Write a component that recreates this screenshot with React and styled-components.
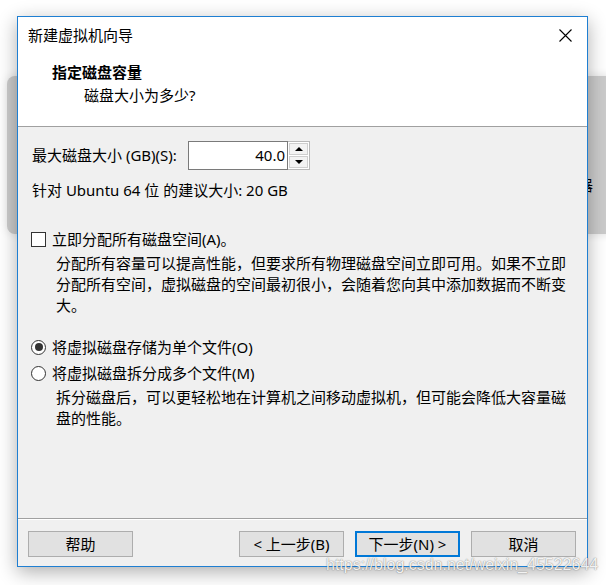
import React from 'react';
import styled, { createGlobalStyle } from 'styled-components';

const GlobalStyle = createGlobalStyle`
  html, body {
    margin: 0;
    padding: 0;
    background: #ffffff;
  }
  body {
    width: 606px;
    height: 585px;
    overflow: hidden;
    font-family: "Noto Sans", "Noto Sans CJK SC", sans-serif;
    color: #000;
  }
`;

const Desktop = styled.div`
  position: relative;
  width: 606px;
  height: 585px;
  overflow: hidden;
  background: #ffffff;
`;

// window behind the wizard
const BackWindow = styled.div`
  position: absolute;
  left: 7px;
  top: 76px;
  width: 640px;
  height: 158px;
  background: #cbcbcb;
  border-radius: 8px;
  box-shadow: 0 0 10px rgba(0, 0, 0, 0.12);
`;

const BackText = styled.span`
  position: absolute;
  left: 571px;
  top: 99px;
  font-size: 15px;
  line-height: 20px;
  font-family: "Noto Sans CJK SC", sans-serif;
`;

const Dialog = styled.div`
  position: absolute;
  left: 17px;
  top: 16px;
  width: 571px;
  height: 551px;
  box-sizing: border-box;
  border: 1px solid #1f7fd2;
  background: #f0f0f0;
  display: flex;
  flex-direction: column;
  box-shadow: 0 5px 18px rgba(0, 0, 0, 0.32);
  font-size: 15px;
`;

const TitleBar = styled.div`
  height: 36px;
  display: flex;
  align-items: center;
  justify-content: space-between;
  padding: 0 15px 0 10px;
  background: #fff;
`;

const Title = styled.span`
  font-size: 15px;
  line-height: 20px;
`;

const CloseIcon = styled.svg`
  width: 13px;
  height: 13px;
  display: block;
`;

const Header = styled.div`
  background: #fff;
  padding: 9px 0 21px 34px;
  border-bottom: 1px solid #a0a0a0;
`;

const HeaderTitle = styled.div`
  font-weight: bold;
  line-height: 20px;
`;

const HeaderSub = styled.div`
  margin-top: 3px;
  padding-left: 32px;
  line-height: 20px;
`;

const Body = styled.div`
  flex: 1;
  padding: 14px 0 0 14px;
`;

const SizeRow = styled.div`
  display: flex;
  align-items: center;
  height: 29px;
`;

const SizeLabel = styled.span`
  width: 156px;
  line-height: 20px;
  margin-top: -2px;
`;

const SpinField = styled.div`
  width: 100px;
  height: 29px;
  box-sizing: border-box;
  border: 1px solid #7a7a7a;
  background: #fff;
  text-align: right;
  padding-right: 2px;
  line-height: 27px;
`;

const SpinButtons = styled.div`
  width: 22px;
  height: 29px;
  box-sizing: border-box;
  border: 1px solid #b9b9b9;
  border-left: none;
  display: flex;
  flex-direction: column;
  gap: 1px;
  background: #fff;
  padding: 1px;
`;

const SpinButton = styled.div`
  flex: 1;
  border: 1px solid #cfcfcf;
  background: #f3f3f3;
  display: flex;
  align-items: center;
  justify-content: center;
  &::after {
    content: '';
    width: 0;
    height: 0;
    border-left: 4px solid transparent;
    border-right: 4px solid transparent;
    ${({ $down }) =>
      $down ? 'border-top: 4px solid #000;' : 'border-bottom: 4px solid #000;'}
  }
`;

const Line = styled.div`
  margin-top: ${({ $top }) => $top}px;
  line-height: 20px;
`;

const OptionRow = styled.div`
  display: flex;
  align-items: center;
  gap: 6px;
  margin-top: ${({ $top }) => $top}px;
  margin-left: -1px;
  line-height: 22px;
`;

const CheckBox = styled.span`
  width: 15px;
  height: 15px;
  box-sizing: border-box;
  border: 1px solid #333;
  background: #fff;
  flex: none;
`;

const Radio = styled.span`
  width: 15px;
  height: 15px;
  box-sizing: border-box;
  border-radius: 50%;
  border: 1px solid #333;
  background: #fff;
  flex: none;
  display: flex;
  align-items: center;
  justify-content: center;
  &::after {
    content: '';
    width: 8px;
    height: 8px;
    border-radius: 50%;
    background: ${({ $checked }) => ($checked ? '#333' : 'transparent')};
  }
`;

const Desc = styled.div`
  margin-top: ${({ $top }) => $top}px;
  margin-left: 24px;
  line-height: 21px;
  white-space: nowrap;
`;

const Footer = styled.div`
  border-top: 1px solid #a0a0a0;
  box-shadow: inset 0 1px 0 #fff;
  padding: 12px 11px 9px 10px;
  display: flex;
  align-items: center;
  gap: 11px;
`;

const Button = styled.div`
  width: 105px;
  height: 26px;
  box-sizing: border-box;
  border: ${({ $default }) => ($default ? '2px solid #0078d7' : '1px solid #adadad')};
  background: #e1e1e1;
  display: flex;
  align-items: center;
  justify-content: center;
  font-size: 15px;
  line-height: 20px;
  margin-left: ${({ $push }) => ($push ? 'auto' : '0')};
`;

const Watermark = styled.div`
  position: absolute;
  left: 326px;
  top: 555px;
  font-family: "Liberation Sans", sans-serif;
  font-size: 16px;
  line-height: 20px;
  color: rgba(255, 255, 255, 0.92);
  text-shadow: 0 0 1px rgba(0, 0, 0, 0.45), 0 0 2px rgba(0, 0, 0, 0.2);
`;

export default function App() {
  return (
    <Desktop>
      <GlobalStyle />
      <BackWindow>
        <BackText>器</BackText>
      </BackWindow>
      <Dialog>
        <TitleBar>
          <Title>新建虚拟机向导</Title>
          <CloseIcon viewBox="0 0 13 13">
            <path d="M0.5 0.5 L12.5 12.5 M12.5 0.5 L0.5 12.5" stroke="#000" strokeWidth="1.1" fill="none" />
          </CloseIcon>
        </TitleBar>
        <Header>
          <HeaderTitle>指定磁盘容量</HeaderTitle>
          <HeaderSub>磁盘大小为多少?</HeaderSub>
        </Header>
        <Body>
          <SizeRow>
            <SizeLabel>最大磁盘大小 (GB)(S):</SizeLabel>
            <SpinField>40.0</SpinField>
            <SpinButtons>
              <SpinButton />
              <SpinButton $down />
            </SpinButtons>
          </SizeRow>
          <Line $top={10}>针对 Ubuntu 64 位 的建议大小: 20 GB</Line>

          <OptionRow $top={28}>
            <CheckBox />
            <span>立即分配所有磁盘空间(A)。</span>
          </OptionRow>
          <Desc $top={3}>
            分配所有容量可以提高性能，但要求所有物理磁盘空间立即可用。如果不立即
            <br />
            分配所有空间，虚拟磁盘的空间最初很小，会随着您向其中添加数据而不断变
            <br />
            大。
          </Desc>

          <OptionRow $top={20}>
            <Radio $checked />
            <span>将虚拟磁盘存储为单个文件(O)</span>
          </OptionRow>
          <OptionRow $top={4}>
            <Radio />
            <span>将虚拟磁盘拆分成多个文件(M)</span>
          </OptionRow>
          <Desc $top={3}>
            拆分磁盘后，可以更轻松地在计算机之间移动虚拟机，但可能会降低大容量磁
            <br />
            盘的性能。
          </Desc>
        </Body>
        <Footer>
          <Button>帮助</Button>
          <Button $push>&lt; 上一步(B)</Button>
          <Button $default>下一步(N) &gt;</Button>
          <Button>取消</Button>
        </Footer>
      </Dialog>
      <Watermark>https://blog.csdn.net/weixin_45522644</Watermark>
    </Desktop>
  );
}
